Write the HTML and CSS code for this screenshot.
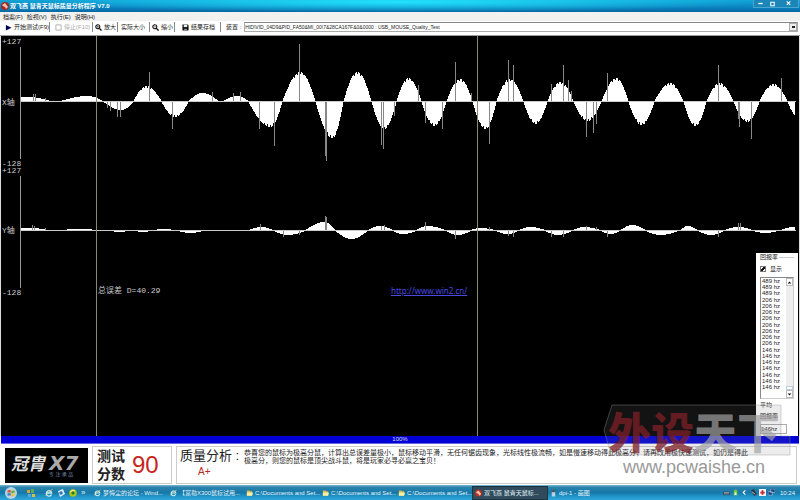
FILE: index.html
```html
<!DOCTYPE html>
<html lang="zh-CN">
<head>
<meta charset="utf-8">
<title>双飞燕 鼠青天鼠标质量分析程序 V7.0</title>
<link rel="stylesheet" href="styles.css">
</head>
<body>
<header class="titlebar">
  <svg class="app-icon" viewBox="0 0 8 8"><circle cx="4" cy="4" r="4" fill="#a8281c"/><path d="M1 3 4 1l3 4-2 2-1-2-2-1z" fill="#f3c2b4"/></svg>
  <h1 class="title">双飞燕 鼠青天鼠标质量分析程序 V7.0</h1>
  <div class="window-buttons">
    <button class="window-button" aria-label="最小化"><svg viewBox="0 0 8 8"><path d="M1.500 4h5" stroke="#fff" stroke-width="1.500"/></svg></button>
    <button class="window-button" aria-label="还原"><svg viewBox="0 0 8 8"><path d="M2 2.500h4v4H2z" fill="none" stroke="#fff" stroke-width="1.200"/></svg></button>
    <button class="window-button window-close" aria-label="关闭"><svg viewBox="0 0 8 8"><path d="m2 1.500 4 4m0-4-4 4" stroke="#fff" stroke-width="1.200"/></svg></button>
  </div>
</header>

<nav class="menubar">
  <button class="menu">档案(F)</button>
  <button class="menu">检视(V)</button>
  <button class="menu">执行(E)</button>
  <button class="menu">说明(H)</button>
</nav>

<div class="toolbar">
  <button class="tool tool-start"><svg class="icon" viewBox="0 0 8 8"><path d="M1 1v6.500l6.500-3.250z" fill="#000050"/></svg>开始测试(F9)</button>
  <button class="tool tool-stop" disabled><svg class="icon" viewBox="0 0 8 8"><path d="M1 1h6v6H1z" fill="#fff" stroke="#aaa"/></svg>停止(F10)</button>
  <button class="tool tool-in"><svg class="icon" viewBox="0 0 8 8"><circle cx="3.200" cy="3.200" r="2.300" fill="none" stroke="#111" stroke-width="1.200"/><path d="m5 5 2.500 2.500" stroke="#111" stroke-width="1.600"/><path d="M2 3.200h2.400M3.200 2v2.400" stroke="#111" stroke-width=".6"/></svg>放大</button>
  <button class="tool tool-actual">实际大小</button>
  <button class="tool tool-out"><svg class="icon" viewBox="0 0 8 8"><circle cx="3.200" cy="3.200" r="2.300" fill="none" stroke="#111" stroke-width="1.200"/><path d="m5 5 2.500 2.500" stroke="#111" stroke-width="1.600"/><path d="M2 3.200h2.400" stroke="#111" stroke-width=".6"/></svg>缩小</button>
  <button class="tool tool-save"><svg class="icon" viewBox="0 0 8 8"><path d="M.5.500h6l1 1v6h-7z" fill="#111"/><path d="M2 .8h4v2.700H2z" fill="#eee"/><path d="M2.500 5.500h3v2h-3z" fill="#999"/></svg>结果存档</button>
  <label class="device-label" for="device">装置 :</label>
  <div class="device">
    <select id="device" class="device-select"><option>HID\VID_04D9&amp;PID_FA50&amp;MI_00\7&amp;28CA167F&amp;0&amp;0000 : USB_MOUSE_Quality_Test</option></select>
    <span class="device-arrow"></span>
  </div>
</div>

<main class="chart">
  <svg id="plot" class="plot" viewBox="0 0 800 400" preserveAspectRatio="none" shape-rendering="crispEdges"></svg>
  <span class="mark x-max">+127</span>
  <span class="mark x-name">X轴</span>
  <span class="mark x-min">-128</span>
  <span class="mark y-max">+127</span>
  <span class="mark y-name">Y轴</span>
  <span class="mark y-min">-128</span>
  <span class="mark total">总误差 D=40.29</span>
  <a class="site" href="http://www.win2.cn/">http://www.win2.cn/</a>

  <aside class="rate">
    <h2 class="rate-title">回报率</h2>
    <label class="rate-show"><input class="rate-check" type="checkbox" checked>显示</label>
    <div class="rate-box">
      <ul class="rate-list">
        <li>489 hz</li><li>489 hz</li><li>489 hz</li>
        <li>206 hz</li><li>206 hz</li><li>206 hz</li><li>206 hz</li><li>206 hz</li><li>206 hz</li><li>206 hz</li><li>206 hz</li>
        <li>146 hz</li><li>146 hz</li><li>146 hz</li><li>146 hz</li><li>146 hz</li><li>146 hz</li><li>146 hz</li>
      </ul>
      <div class="scroll">
        <button class="scroll-button" aria-label="向上"><svg viewBox="0 0 7 7"><path d="M1 5h5L3.500 2z"/></svg></button>
        <span class="scroll-thumb"></span>
        <button class="scroll-button" aria-label="向下"><svg viewBox="0 0 7 7"><path d="M1 2h5L3.500 5z"/></svg></button>
      </div>
    </div>
    <label class="rate-average" for="average">平均<br>回报率</label>
    <input id="average" class="rate-value" value="146hz" readonly>
  </aside>
</main>

<div class="progress">100%</div>

<section class="result">
  <div class="logo"><span class="logo-name">冠胄</span><span class="logo-model">X7</span><span class="logo-slogan">专 注 承 品</span></div>
  <div class="score"><span class="score-label">测试<br>分数</span><strong class="score-value">90</strong></div>
  <div class="quality">
    <div class="quality-head"><span class="quality-label">质量分析 :</span><strong class="quality-grade">A+</strong></div>
    <p class="quality-text">恭喜您的鼠标为极高分鼠，计算出总误差量极小，鼠标移动平滑，无任何锯齿现象，光标线性极流畅，如是慢速移动得此极高分，请再改用极快速测试，如仍是得此<br>极高分，则您的鼠标是顶尖战斗鼠，将是玩家必寻必赢之宝贝！</p>
  </div>
</section>

<footer class="taskbar">
  <div class="quick">
    <button class="start" aria-label="开始"><svg viewBox="0 0 12 12"><circle cx="6" cy="6" r="6" fill="#b9d3e2"/><path d="M2.500 3.500Q4 2.500 5.700 3.300V5.700Q4 5 2.500 5.800z" fill="#e0522c"/><path d="M6.300 3.500Q8 4.200 9.700 3.300V5.600Q8 6.500 6.300 5.900z" fill="#6cab37"/><path d="M2.500 6.400Q4 5.700 5.700 6.400V8.800Q4 8 2.500 8.800z" fill="#3d7fd0"/><path d="M6.300 6.500Q8 7.200 9.700 6.300V8.600Q8 9.500 6.300 8.900z" fill="#efc233"/></svg></button>
    <svg class="quick-icon quick-first" viewBox="0 0 8 8"><path d="M0 1h3v3H0z" fill="#d9a23b"/><path d="M4 0h3v4H4z" fill="#5cab55"/><path d="M1 5h3v3H1z" fill="#5da5d8"/><path d="M5 5h3v3H5z" fill="#d2bf46"/></svg>
    <svg class="quick-icon" viewBox="0 0 8 8"><path d="M6.500 5.500A2.700 2.700 0 1 1 6.700 4H2" fill="none" stroke="#c8efff" stroke-width="1.300"/><path d="M1 7Q0 5 7.500.5" fill="none" stroke="#f0d668" stroke-width=".7"/></svg>
    <svg class="quick-icon" viewBox="0 0 8 8"><path d="M1 2 6 0l2 5-5 3z" fill="#dceefa"/><circle cx="4" cy="4" r="1.800" fill="#3178bc"/></svg>
    <svg class="quick-icon" viewBox="0 0 8 8"><circle cx="4" cy="4" r="3.800" fill="#a7c61c"/><circle cx="4" cy="4" r="1.500" fill="#287a28"/><path d="M1 3 4 1l2 1" fill="none" stroke="#fff19a"/></svg>
    <span class="more">»</span>
  </div>
  <div class="tasks">
    <button class="task"><svg class="task-icon" viewBox="0 0 8 8"><path d="M6.500 5.500A2.700 2.700 0 1 1 6.700 4H2" fill="none" stroke="#c8efff" stroke-width="1.300"/><path d="M1 7Q0 5 7.500.5" fill="none" stroke="#f0d668" stroke-width=".7"/></svg>梦悔尘的论坛 - Wind...</button>
    <button class="task"><svg class="task-icon" viewBox="0 0 8 8"><path d="M6.500 5.500A2.700 2.700 0 1 1 6.700 4H2" fill="none" stroke="#c8efff" stroke-width="1.300"/><path d="M1 7Q0 5 7.500.5" fill="none" stroke="#f0d668" stroke-width=".7"/></svg>【富勒X300鼠标试用...</button>
    <button class="task"><svg class="task-icon" viewBox="0 0 8 8"><path d="M1 1h3l1 1h2v5H1z" fill="#d9bd4e"/><path d="M1 3.500h7L7 7H1z" fill="#f6efaa"/></svg>C:\Documents and Set...</button>
    <button class="task"><svg class="task-icon" viewBox="0 0 8 8"><path d="M1 1h3l1 1h2v5H1z" fill="#d9bd4e"/><path d="M1 3.500h7L7 7H1z" fill="#f6efaa"/></svg>C:\Documents and Set...</button>
    <button class="task"><svg class="task-icon" viewBox="0 0 8 8"><path d="M1 1h3l1 1h2v5H1z" fill="#d9bd4e"/><path d="M1 3.500h7L7 7H1z" fill="#f6efaa"/></svg>C:\Documents and Set...</button>
    <button class="task task-active"><svg class="task-icon" viewBox="0 0 8 8"><circle cx="4" cy="4" r="4" fill="#b93222"/><path d="M1 3 4 1l3 4-2 2-1-2-2-1z" fill="#f3c2b4"/></svg>双飞燕 鼠青天鼠标...</button>
    <button class="task"><svg class="task-icon" viewBox="0 0 8 8"><path d="M2 3h4v5H2z" fill="#b9d3e0"/><path d="M3 3 2 0M4 3V0M5 3l1-3" stroke="#5d5148"/></svg>dpi-1 - 画图</button>
  </div>
  <div class="tray">
    <svg class="tray-icon" viewBox="0 0 8 8"><path d="M0 3h8v4H0z" fill="#3a4e60"/><path d="M1 4h6M1 5.500h6" stroke="#bcd0dc" stroke-width=".6"/></svg>
    <svg class="tray-icon" viewBox="0 0 8 8"><path d="M2 2Q4-1 6 2v5H2z" fill="#77c63c"/><path d="M3 4h2v3H3z" fill="#e9ffd9"/></svg>
    <svg class="tray-icon" viewBox="0 0 8 8"><path d="M5 1.500 2.500 4 5 6.500" fill="none" stroke="#fff" stroke-width="1.300"/></svg>
    <svg class="tray-icon" viewBox="0 0 8 8"><path d="M1 2 4 0l4 6-3 2z" fill="#263440"/><path d="m2 3 4 3" stroke="#ccc"/></svg>
    <svg class="tray-icon" viewBox="0 0 8 8"><path d="M0 0h8v8H0z" fill="#f4f4f4"/><path d="M4 1.500v5M1.500 4h5" stroke="#d42032" stroke-width="2"/></svg>
    <svg class="tray-icon" viewBox="0 0 8 8"><path d="M3 0h5v4H3zM0 3h5v4H0z" fill="#213f78" stroke="#bad8f0" stroke-width=".6"/></svg>
    <time class="clock">10:24</time>
  </div>
</footer>

<div class="watermark">
  <svg class="watermark-plate" viewBox="0 0 188 54" preserveAspectRatio="none"><path d="M9 2H178V33H187V52H8L1 27z" fill="#808080" fill-opacity=".15" stroke="#999" stroke-opacity=".4"/></svg>
  <span class="watermark-name"><span class="watermark-red">外设</span>天下</span>
  <span class="watermark-url">www.pcwaishe.cn</span>
</div>
<script src="plot.js"></script>
</body>
</html>
```
FILE: styles.css
```css
* { box-sizing: border-box; }

body {
  margin: 0;
  min-height: 100vh;
  display: flex;
  flex-direction: column;
  position: relative;
  background: #fff;
  color: #222;
  font: 6px/8px "Liberation Sans", "Noto Sans CJK SC", sans-serif;
}

button, input, select {
  margin: 0;
  padding: 0;
  border: 0;
  background: none;
  color: inherit;
  font: inherit;
}

button {
  display: flex;
  align-items: center;
  white-space: nowrap;
}

svg { display: block; }

/* Title bar */
.titlebar {
  height: 12px;
  padding-left: 1px;
  display: flex;
  align-items: center;
  gap: 1px;
  color: #fff;
  background:
    radial-gradient(ellipse 45% 10px at 50% 2px, #22e2fc, rgba(34, 226, 252, 0)),
    linear-gradient(#12a5d8, #0b84c0 60%, #0668a2);
}
.app-icon { width: 8px; height: 8px; }
.title { margin: 0; font-size: 6px; line-height: 8px; font-weight: 700; }
.window-buttons {
  margin: 0 1px 4px auto;
  height: 8px;
  display: flex;
  border: 1px solid #48a6cf;
  border-top: 0;
  background: #1c86b8;
}
.window-button { width: 12px; justify-content: center; }
.window-close { width: 20px; }
.window-button svg { width: 7px; height: 7px; }

/* Menus and tools */
.menubar {
  height: 9px;
  padding-left: 3px;
  display: flex;
  gap: 4px;
  background: #f1f1ef;
}
.toolbar {
  height: 15px;
  padding: 1px 2px 3px 3px;
  display: flex;
  border-bottom: 1px solid #999;
}
.tool { padding: 0 2px; gap: 2px; border-right: 1px solid #888; }
.tool:disabled { color: #aaa; }
.icon { flex: none; width: 7px; height: 7px; }
.tool-start { width: 47px; }
.tool-stop { width: 43px; padding-left: 5px; }
.tool-in { width: 25px; }
.tool-actual { width: 32px; padding-left: 3px; }
.tool-out { width: 25px; }
.tool-save { width: 46px; padding-left: 7px; }
.device-label { padding: 1px 3px 0 5px; white-space: nowrap; }
.device {
  flex: 1;
  display: flex;
  border: 1px solid #aaa;
  border-top-color: #888;
}
.device-select {
  flex: 1;
  min-width: 0;
  appearance: none;
  font-size: 5px;
}
.device-arrow {
  width: 8px;
  border: 1px solid #aaa;
  background: #eee linear-gradient(#222, #222) center / 3px 2px no-repeat;
  pointer-events: none;
}

/* Signal chart */
.chart {
  flex: 1;
  min-height: 320px;
  position: relative;
  border-left: 1px solid #ddd;
  border-right: 1px solid #ddd;
  background: #000;
}
.plot { position: absolute; left: -1px; width: calc(100% + 2px); height: 100%; }
.mark {
  position: absolute;
  left: 1px;
  color: #ccc;
  font: 8px/8px "Liberation Mono", "Noto Sans CJK SC", monospace;
  white-space: nowrap;
}
.x-max { top: 2px; }
.x-name { top: 63px; }
.x-min { top: 124px; }
.y-max { top: 131px; }
.y-name { top: 191px; }
.y-min { top: 253px; }
.total { top: 251px; left: 97px; }
.site {
  position: absolute;
  top: 250px;
  left: 390px;
  color: #4a4ae0;
  font: 8px/10px "Noto Sans", sans-serif;
}

/* Report rate panel */
.rate {
  position: absolute;
  right: 1px;
  bottom: 0;
  width: 42px;
  height: 183px;
  padding: 0 4px 2px;
  display: flex;
  flex-direction: column;
  background: #fff;
}
.rate-title { margin: 0; font-size: 6px; line-height: 8px; font-weight: 400; display: flex; align-items: center; gap: 1px; }
.rate-title::after { content: ""; flex: 1; border-top: 1px solid #ccc; }
.rate-show { margin: 4px 0; display: flex; align-items: center; gap: 4px; }
.rate-check {
  appearance: none;
  width: 6px;
  height: 6px;
  border: 1px solid #777;
  background: linear-gradient(135deg, #fff 35%, #111 36% 65%, #fff 66%);
}
.rate-box {
  height: 122px;
  display: flex;
  border: 1px solid #888;
  border-right-color: #ccc;
  border-bottom-color: #ccc;
}
.rate-list {
  flex: 1;
  margin: 0;
  padding: 0 0 8px 1px;
  display: flex;
  flex-direction: column;
  justify-content: space-between;
  list-style: none;
  line-height: 6px;
  white-space: nowrap;
}
.scroll { width: 7px; display: flex; flex-direction: column; background: #eee; }
.scroll-button { height: 8px; border: 1px solid #bbb; background: #fff; }
.scroll-button svg { width: 5px; height: 5px; }
.scroll-thumb { height: 4px; margin-top: auto; border: 1px solid #bcd; background: #fff; }
.rate-average { margin: 1px 0 2px; line-height: 11px; }
.rate-value { width: 27px; height: 10px; border: 1px solid #aaa; background: #fff; }

/* Progress */
.progress {
  height: 8px;
  margin: 0 1px 2px;
  border-bottom: 1px solid #6666e8;
  background: #0000d4;
  color: #ddd;
  line-height: 7px;
  text-align: center;
}

/* Result */
.result {
  height: 38px;
  padding: 0 3px 0 5px;
  display: flex;
  gap: 4px;
}
.logo {
  width: 83px;
  height: 35px;
  margin-top: 2px;
  padding: 7px 3px 0 6px;
  display: grid;
  grid-template-columns: 38px 1fr;
  grid-template-rows: 16px 7px;
  background: #000;
  color: #ddd;
  font-style: italic;
  font-weight: 700;
  white-space: nowrap;
}
.logo-name { font-size: 17px; line-height: 20px; }
.logo-model { font: italic 700 20px/16px "DejaVu Sans", sans-serif; color: #aaa; }
.logo-slogan { grid-column: 2; font-size: 5px; line-height: 7px; font-weight: 400; font-style: normal; color: #7b9ab8; }
.score {
  width: 80px;
  padding-left: 4px;
  display: flex;
  align-items: center;
  gap: 7px;
  border: 1px solid #ccc;
}
.score-label { color: #222; font-size: 14px; line-height: 18px; font-weight: 700; }
.score-value { color: #c8261c; font-size: 24px; line-height: 28px; font-weight: 400; }
.quality {
  flex: 1;
  min-width: 0;
  padding-left: 3px;
  display: flex;
  border: 1px solid #ccc;
}
.quality-head { width: 64px; display: flex; flex-direction: column; }
.quality-label { font-size: 13px; line-height: 18px; white-space: nowrap; }
.quality-grade { padding-left: 18px; color: #b8281c; font-size: 10px; line-height: 14px; font-weight: 400; }
.quality-text { flex: 1; margin: 2px 0 0; font-size: 7px; line-height: 8px; }

/* Taskbar */
.taskbar {
  height: 15px;
  margin-top: 1px;
  display: flex;
  align-items: center;
  color: #e4f4fb;
  background: linear-gradient(#7db8ce, #2b83ae 15%, #1678a8 50%, #2398cc 80%, #2fa6dc);
}
.quick { width: 92px; padding-left: 5px; display: flex; align-items: center; }
.start svg { width: 12px; height: 12px; }
.quick-icon { width: 8px; height: 8px; margin-right: 4px; }
.quick-first { margin: 0 10px; }
.more { font-size: 8px; }
.tasks { flex: 1; max-width: 532px; display: grid; grid-template-columns: repeat(7, minmax(0, 1fr)); }
.task { height: 14px; padding: 0 2px; gap: 2px; overflow: hidden; }
.task-active { background: #304c5c; border: 1px solid #1d3441; }
.task-icon { flex: none; width: 7px; height: 8px; }
.tray { margin-left: auto; padding-right: 5px; display: flex; align-items: center; gap: 2px; }
.tray-icon { width: 7px; height: 7px; }
.clock { padding-left: 3px; }

/* Site mark laid over the lower right corner */
.watermark {
  position: absolute;
  right: 9px;
  bottom: 23px;
  width: 188px;
  display: flex;
  flex-direction: column;
  pointer-events: none;
}
.watermark-plate { position: absolute; width: 100%; height: 54px; }
.watermark-name {
  padding-left: 5px;
  color: rgba(170, 170, 170, .7);
  font: 900 43px/54px "Noto Sans CJK SC", sans-serif;
  white-space: nowrap;
}
.watermark-red { color: rgba(125, 15, 25, .75); }
.watermark-url {
  padding-left: 20px;
  color: #999;
  font-size: 18px;
  line-height: 20px;
}
```
FILE: plot.js
```js
// Each lobe is [start, peak, end, amplitude]; each spike is [x, amplitude].
const axes = [
  {
    base: 65, top: 11, bottom: 123,
    lobes: [[8,27,50,4],[60,87,103,5],[103,121,133,-8],[133,146,161,15],[161,175,188,-15],
      [188,202,218,8],[223,237,248,5],[248,270,282,-25],[282,300,315,29],[315,332,343,-36],
      [343,357,371,29],[371,384,396,-27],[396,408,421,23],[421,434,446,-24],[446,460,472,22],
      [472,485,496,-27],[496,509,523,22],[523,535,547,-22],[547,560,573,19],[573,587,601,-19],
      [601,616,628,23],[628,641,654,-23],[654,670,683,18],[683,695,706,-24],[706,719,733,18],
      [733,747,759,-20],[759,773,787,17],[787,799,811,-17]],
    spikes: [[33,7],[35,7],[45,3],[107,-6],[110,-9],[117,-15],[120,-15],[149,29],[172,-27],
      [212,9],[233,8],[240,9],[259,-27],[274,-44],[299,57],[325,-54],[326,-59],[381,-43],
      [383,-47],[394,-14],[418,16],[425,-21],[442,-27],[455,39],[471,8],[489,-42],[508,41],
      [513,36],[551,17],[563,36],[568,21],[571,10],[586,-35],[593,-31],[596,-22],[607,28],
      [718,36],[738,-17],[739,-25],[751,-37],[781,23]]
  },
  {
    base: 194, top: 140, bottom: 252,
    lobes: [[8,30,48,2],[60,80,98,1],[110,119,128,-1],[135,143,150,-1],[153,163,175,1],
      [177,190,203,-2],[248,261,273,3],[273,287,305,-4],[305,324,335,8],[335,351,367,-8],
      [367,380,392,4],[392,403,416,-3],[416,427,445,4],[445,458,470,-4],[470,480,495,2],
      [495,507,518,-3],[518,530,545,3],[545,557,572,-4],[572,584,600,3],[600,610,620,-3],
      [620,632,645,5],[645,660,678,-4],[680,687,697,4],[697,711,723,-4],[724,738,752,3],
      [752,765,778,-2],[780,793,800,3]],
    spikes: [[32,5],[34,4],[45,2],[260,6],[283,-6],[299,-4],[325,14],[326,13],[381,4],[384,5],
      [425,8],[455,-8],[489,3],[508,-5],[513,-6],[551,-6],[563,-6],[586,4],[596,3],[607,-6],
      [718,-6],[738,7],[740,7]]
  }
];

const plot = document.getElementById("plot");

function shape(d, color) {
  const path = document.createElementNS("http://www.w3.org/2000/svg", "path");
  path.setAttribute("d", d);
  path.setAttribute("fill", color);
  plot.append(path);
}

function bar(x, y, width, height) {
  return `M${x} ${y}h${width}v${height}h${-width}z`;
}

function column(x, base, height) {
  return height > 0 ? bar(x, base - height, 1, height) : bar(x, base + 1, 1, -height);
}

for (const axis of axes) {
  let wave = "";
  for (const [start, peak, end, size] of axis.lobes) {
    const first = Math.max(start, 20);
    const last = Math.min(end, 795);
    wave += `M${first} ${axis.base}`;
    for (let x = first; x < last; x++) {
      const t = x < peak ? (x - start) / (peak - start) : (end - x) / (end - peak);
      const ripple = Math.abs(size) > 10 && t > 0.6 && x % 3 === 0 ? 2 : 0;
      const height = Math.round(Math.sin(t * Math.PI / 2) * (Math.abs(size) - ripple));
      wave += `V${axis.base + (size > 0 ? -height : height + 1)}H${x + 1}`;
    }
    wave += `V${axis.base}z`;
  }
  shape(wave, "#fff");
  shape(axis.spikes.map(([x, size]) => column(x, axis.base, size)).join(""), "#888");
  shape(bar(20, axis.base, 776, 1), "#ccc");
  shape(bar(20, axis.top, 1, axis.bottom - axis.top), "#999");
}

shape(bar(96, 0, 1, 400) + bar(477, 0, 1, 400), "#8d876f");
```
